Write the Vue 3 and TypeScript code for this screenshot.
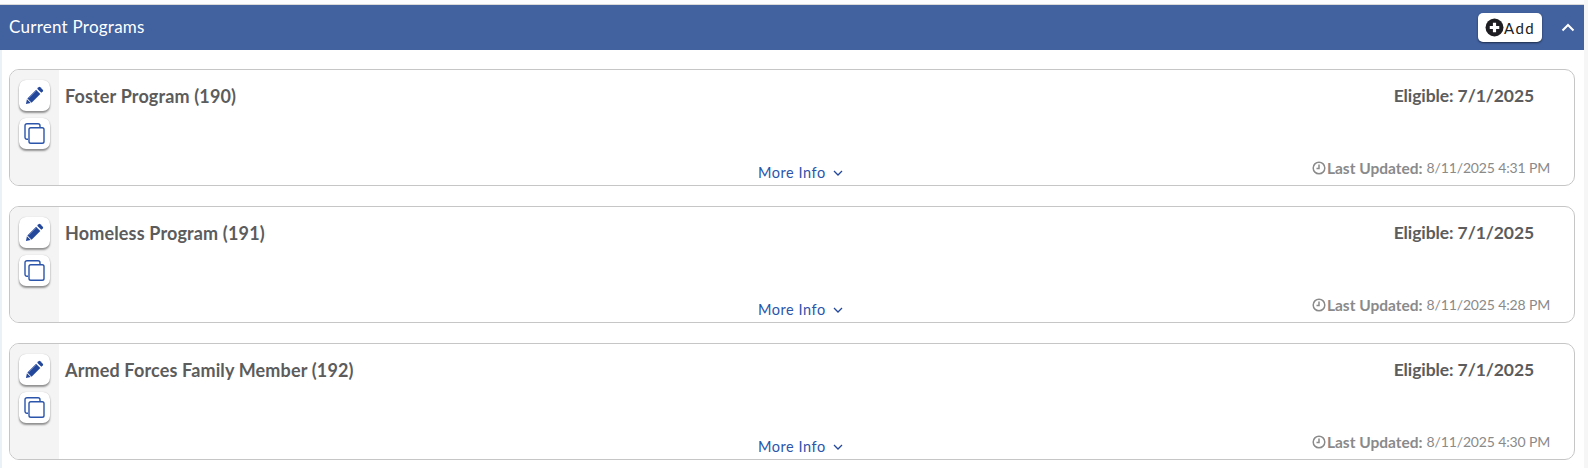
<script setup lang="ts">
interface Program { title: string; eligible: string; updated: string }
const programs: Program[] = [
  { title: 'Foster Program (190)', eligible: 'Eligible: 7/1/2025', updated: '8/11/2025 4:31 PM' },
  { title: 'Homeless Program (191)', eligible: 'Eligible: 7/1/2025', updated: '8/11/2025 4:28 PM' },
  { title: 'Armed Forces Family Member (192)', eligible: 'Eligible: 7/1/2025', updated: '8/11/2025 4:30 PM' },
]
</script>

<template>
  <div class="page">
    <header class="bar">
      <span class="bar-title">Current Programs</span>
      <div class="bar-actions">
        <button class="add" type="button">
          <svg class="add-icon" viewBox="0 0 18 18" width="19" height="19">
            <circle cx="9" cy="9" r="8.500" fill="#1d1d22" />
            <path d="M9 4.500v9M4.500 9h9" stroke="#fff" stroke-width="3" fill="none" />
          </svg>
          <span>Add</span>
        </button>
        <svg class="collapse" viewBox="0 0 14 9" width="14" height="9">
          <path d="M1.500 7.500 7 2l5.500 5.500" stroke="#fff" stroke-width="2" fill="none" />
        </svg>
      </div>
    </header>
    <main class="list">
      <article v-for="p in programs" :key="p.title" class="card">
        <aside class="rail">
          <button class="tool" type="button" aria-label="Edit">
            <svg viewBox="0 0 20 20" width="19" height="19">
              <path d="M14.300 1.300a1.300 1.300 0 0 1 1.800 0l2.600 2.600a1.300 1.300 0 0 1 0 1.800l-1.500 1.500-4.400-4.400z" fill="#23479b" />
              <path d="M11.700 3.900l4.400 4.400-9.200 9.200-4.400-4.400z" fill="#23479b" />
              <path d="M2 14l4 4-5 1z" fill="#23479b" />
              <path d="M3.800 12.800 11.900 4.700" stroke="#7f97c9" stroke-width=".8" />
            </svg>
          </button>
          <button class="tool" type="button" aria-label="Copy">
            <svg viewBox="0 0 21 21" width="21" height="21" fill="none" stroke="#2a55ab" stroke-width="1.400">
              <path d="M4 16.300h-1a2 2 0 0 1-2-2V2.700a2 2 0 0 1 2-2h11a2 2 0 0 1 2 2V4" />
              <rect x="5" y="4.800" width="15" height="15.500" rx="1.800" />
            </svg>
          </button>
        </aside>
        <div class="body">
          <div class="top">
            <h2 class="title">{{ p.title }}</h2>
            <div class="eligible">{{ p.eligible }}</div>
          </div>
          <div class="bottom">
            <a class="more">More Info
              <svg viewBox="0 0 10 6" width="10" height="6">
                <path d="M1 1l4 4 4-4" stroke="#23479b" stroke-width="1.300" fill="none" />
              </svg>
            </a>
            <div class="updated">
              <svg viewBox="0 0 14 14" width="14" height="14" fill="none" stroke="#8a8a8a" stroke-width="1.500">
                <circle cx="7" cy="7" r="5.800" />
                <path d="M7 3.500V7.500H4.500" />
              </svg>
              <b>Last Updated:</b>
              <span>{{ p.updated }}</span>
            </div>
          </div>
        </div>
      </article>
    </main>
  </div>
</template>

<style>
html, body { margin: 0; background: #fff; }
</style>

<style scoped>
.page {
  box-sizing: border-box;
  width: 1588px;
  height: 468px;
  overflow: hidden;
  padding-top: 4px;
  background: #fbfcfd;
  border-right: 4px solid #f6f6f6;
  font-family: "Lato", "Liberation Sans", sans-serif;
}
.bar {
  box-sizing: border-box;
  width: 1584px;
  height: 46px;
  border-top: 1px solid #d9d9d9;
  background: #41619f;
  display: flex;
  align-items: center;
  justify-content: space-between;
  padding: 0 9px 0 9px;
  color: #fff;
}
.bar-title { font-size: 17px; font-weight: 400; letter-spacing: 0.25px; padding-bottom: 3px; }
.bar-actions { display: flex; align-items: center; gap: 19px; }
.add {
  box-sizing: border-box;
  width: 64px;
  height: 29px;
  border: 0;
  border-radius: 5px;
  background: #fff;
  box-shadow: 0 1px 2px rgba(0, 0, 0, .55);
  display: flex;
  align-items: center;
  gap: 0;
  padding: 0 0 0 7px;
  font: 400 15px "Lato", sans-serif;
  letter-spacing: 1.400px;
  color: #1d1d22;
}
.add-icon { flex: none; }
.list {
  box-sizing: border-box;
  width: 1584px;
  height: 418px;
  background: #fff;
  border-left: 2px solid #eaf2f8;
  padding: 19px 9px 0 7px;
  display: flex;
  flex-direction: column;
  gap: 20px;
}
.card {
  box-sizing: border-box;
  flex: none;
  height: 117px;
  border: 1px solid #c6c6c6;
  border-radius: 10px;
  display: flex;
  overflow: hidden;
  background: #fff;
}
.rail {
  flex: none;
  width: 49px;
  background: #f4f4f4;
  padding: 10px 0 0 9px;
  box-sizing: border-box;
  display: flex;
  flex-direction: column;
  gap: 7px;
}
.tool {
  width: 31px;
  height: 31px;
  box-sizing: border-box;
  padding: 0;
  border: 0;
  border-radius: 7px;
  background: #fff;
  box-shadow: 0 2px 2px rgba(0, 0, 0, .4), 0 0 1px rgba(0, 0, 0, .25);
  display: flex;
  align-items: center;
  justify-content: center;
}
.body {
  flex: 1;
  display: flex;
  flex-direction: column;
  justify-content: space-between;
  padding: 15px 24px 0 6px;
  color: #5c5c5c;
  min-width: 0;
}
.top { display: flex; justify-content: space-between; padding-right: 16px; }
.title, .eligible {
  margin: 0;
  font-size: 18px;
  font-weight: 700;
  line-height: 22px;
  letter-spacing: 0.15px;
  color: #5c5c5c;
}
.eligible { letter-spacing: -0.1px; font-size: 17.500px; }
.bottom {
  display: flex;
  justify-content: flex-end;
  align-items: flex-end;
  position: relative;
  height: 27px;
}
.more {
  position: absolute;
  left: 693px;
  bottom: 1px;
  font-size: 14.500px;
  line-height: 22px;
  letter-spacing: 0.55px;
  color: #2a55ab;
  display: flex;
  align-items: center;
  gap: 7px;
}
.updated {
  display: flex;
  align-items: center;
  gap: 1px;
  font-size: 14px;
  line-height: 18px;
  color: #8a8a8a;
  padding-bottom: 8px;
}
.updated b { font-weight: 700; font-size: 15.500px; margin-right: 3px; }
.updated span { letter-spacing: -0.15px; }
</style>
